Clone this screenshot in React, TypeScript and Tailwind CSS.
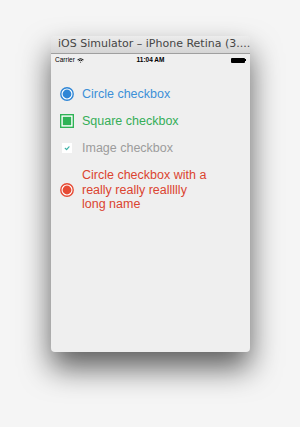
import React from 'react';

function CircleBox({ color }: { color: string }) {
  return (
    <svg width="14" height="14" viewBox="0 0 14 14">
      <circle cx="7" cy="7" r="6.2" fill="white" stroke={color} strokeWidth="1.4" />
      <circle cx="7" cy="7" r="4.4" fill={color} />
    </svg>
  );
}

function SquareBox({ color }: { color: string }) {
  return (
    <svg width="14" height="14" viewBox="0 0 14 14">
      <rect x="0.7" y="0.7" width="12.6" height="12.6" fill="white" stroke={color} strokeWidth="1.4" />
      <rect x="2.8" y="2.8" width="8.4" height="8.4" fill={color} />
    </svg>
  );
}

function ImageBox() {
  return (
    <svg width="14" height="14" viewBox="0 0 14 14">
      <rect x="2" y="2" width="10" height="10" fill="white" />
      <path d="M5.2 7.3 L6.6 8.6 L9 5.8" fill="none" stroke="#3cb3a8" strokeWidth="1.2" strokeLinecap="round" strokeLinejoin="round" />
    </svg>
  );
}

const rows = [
  { label: 'Circle checkbox', text: 'text-[#3d8fd8]', icon: <CircleBox color="#2f86d6" /> },
  { label: 'Square checkbox', text: 'text-[#35ae58]', icon: <SquareBox color="#2fb356" /> },
  { label: 'Image checkbox', text: 'text-[#9c9c9c]', icon: <ImageBox /> },
  { label: 'Circle checkbox with a really really reallllly long name', text: 'text-[#db4430]', icon: <CircleBox color="#e64a34" /> },
];

export default function App() {
  return (
    <div className="w-[300px] h-[427px] bg-[#f5f5f5] pt-[36px] pl-[51px] overflow-hidden" style={{ fontFamily: '"Liberation Sans", Arial, sans-serif' }}>
      <div className="w-[199px] h-[316px] flex flex-col bg-[#efefef] rounded-[4px] shadow-[0_16px_30px_rgba(0,0,0,0.62)]">
        {/* title bar */}
        <div className="h-[18px] flex items-center px-[7px] rounded-t-[4px] bg-gradient-to-b from-[#ececec] to-[#d5d5d5] border-b border-[#9f9f9f] overflow-hidden whitespace-nowrap">
          <span className="text-[11px] text-[#454545]" style={{ fontFamily: '"DejaVu Sans", sans-serif' }}>iOS Simulator – iPhone Retina (3....</span>
        </div>

        {/* status bar */}
        <div className="h-[12px] flex items-center justify-between px-[4px] text-[6.5px] text-black">
          <div className="flex items-center gap-[2px] w-[40px]">
            <span>Carrier</span>
            <svg width="7" height="5" viewBox="0 0 7 5">
              <path d="M0.5 1.8 Q3.5 -0.6 6.5 1.8" fill="none" stroke="black" strokeWidth="0.9" />
              <path d="M1.6 2.9 Q3.5 1.3 5.4 2.9" fill="none" stroke="black" strokeWidth="0.9" />
              <path d="M2.7 4 L3.5 4.8 L4.3 4 Q3.5 3.3 2.7 4Z" fill="black" />
            </svg>
          </div>
          <span className="font-bold">11:04 AM</span>
          <div className="w-[40px] flex justify-end">
            <div className="flex items-center">
              <div className="w-[14px] h-[5px] bg-black rounded-[1px]" />
              <div className="w-[1px] h-[2px] bg-black" />
            </div>
          </div>
        </div>

        {/* content */}
        <div className="flex flex-col gap-[12.5px] pt-[21px] pl-[9px]">
          {rows.map((r) => (
            <div key={r.label} className="flex items-center gap-[8px]">
              <div className="w-[14px] h-[14px] flex items-center justify-center">{r.icon}</div>
              <span className={`w-[130px] text-[12.5px] leading-[14.5px] ${r.text}`}>{r.label}</span>
            </div>
          ))}
        </div>
      </div>
    </div>
  );
}
